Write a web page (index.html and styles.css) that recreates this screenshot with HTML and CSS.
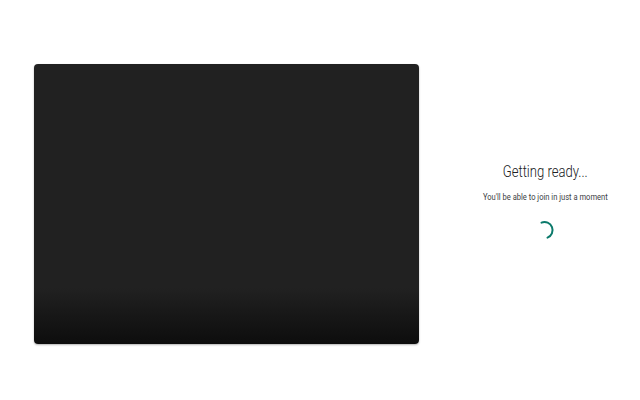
FILE: index.html
```html
<!DOCTYPE html>
<html>
<head>
<meta charset="utf-8">
<link rel="stylesheet" href="styles.css">
</head>
<body>
<div class="page">
  <div class="preview"></div>
  <div class="status">
    <div class="title"><span>Getting ready...</span></div>
    <div class="subtitle"><span>You'll be able to join in just a moment</span></div>
    <svg class="spinner" width="24" height="24" viewBox="0 0 24 24">
      <path d="M8.5 4.6 A8 8 0 0 1 14.5 19.6" fill="none" stroke="#0b7a6b" stroke-width="2" stroke-linecap="round"/>
    </svg>
  </div>
</div>
</body>
</html>
```
FILE: styles.css
```css
html, body {
  margin: 0;
  padding: 0;
  background: #ffffff;
  width: 640px;
  height: 400px;
  overflow: hidden;
  font-family: Roboto, "Noto Sans", sans-serif;
}
.page {
  display: flex;
  align-items: flex-start;
  padding: 64px 0 0 34px;
  gap: 31px;
}
.preview {
  width: 385px;
  height: 280px;
  border-radius: 4px;
  background: linear-gradient(to bottom, #212121 0%, #212121 80%, #171717 90%, #0d0d0d 100%);
  box-shadow: 0 1px 2px rgba(0,0,0,0.3);
  flex: none;
}
.status {
  flex: 1;
  display: flex;
  flex-direction: column;
  align-items: center;
  padding-top: 97px;
}
.title {
  font-size: 17px;
  line-height: 20px;
  font-weight: 300;
  color: #202124;
  white-space: nowrap;
}
.title span {
  display: inline-block;
  transform: scaleX(0.77);
}
.subtitle span {
  display: inline-block;
  transform: scaleX(0.84);
}
.subtitle {
  margin-top: 10px;
  font-size: 9px;
  line-height: 12px;
  color: #3c4043;
  white-space: nowrap;
}
.spinner {
  margin-top: 15px;
}
```
